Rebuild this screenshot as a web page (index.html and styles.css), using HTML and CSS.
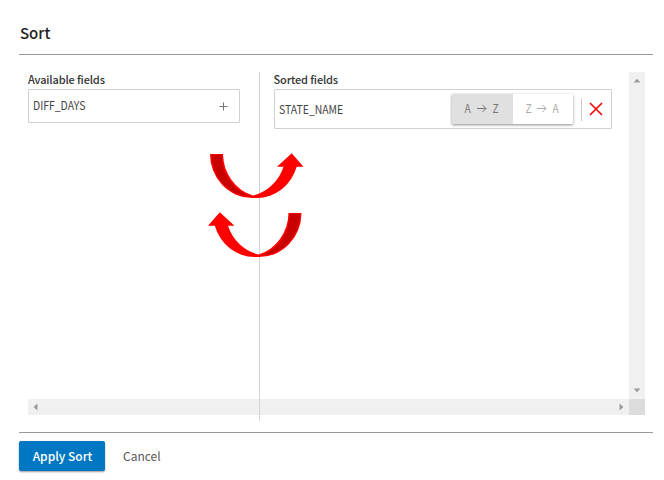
FILE: index.html
```
<!DOCTYPE html>
<html lang="en">
<head>
<meta charset="utf-8">
<title>Sort</title>
<link rel="stylesheet" href="styles.css">
</head>
<body>
<main class="dialog">
  <header class="dialog-header"><h1>Sort</h1></header>
  <section class="viewport">
    <div class="columns">
      <div class="available">
        <h2 class="tight">Available fields</h2>
        <div class="card card-small">
          <span class="name">DIFF_DAYS</span>
          <svg class="plus" width="9" height="9" viewBox="0 0 9 9"><path d="M4.5 .5v8M.5 4.5h8"/></svg>
        </div>
      </div>
      <div class="sorted">
        <h2 class="tight">Sorted fields</h2>
        <div class="card card-large">
          <span class="name">STATE_NAME</span>
          <div class="toggle">
            <button class="option selected"><span>A</span><svg width="10" height="9" viewBox="0 0 10 9"><path d="M0 4.5h9M5.500 1L9 4.500 5.500 8"/></svg><span>Z</span></button>
            <button class="option"><span>Z</span><svg width="10" height="9" viewBox="0 0 10 9"><path d="M0 4.5h9M5.500 1L9 4.500 5.500 8"/></svg><span>A</span></button>
          </div>
          <div class="remove"><svg width="14" height="14" viewBox="0 0 14 14"><path d="M1 1l12 12M13 1L1 13"/></svg></div>
        </div>
      </div>
    </div>
    <div class="bar bar-v">
      <svg width="8" height="5" viewBox="0 0 8 5"><path d="M.7 4.5L4 .8l3.3 3.7z"/></svg>
      <svg width="8" height="5" viewBox="0 0 8 5"><path d="M.7 .5L4 4.2 7.3 .5z"/></svg>
    </div>
    <div class="bar bar-h">
      <svg width="5" height="8" viewBox="0 0 5 8"><path d="M4.5 .5L.6 4l3.9 3.5z"/></svg>
      <svg width="5" height="8" viewBox="0 0 5 8"><path d="M.5 .5L4.4 4 .5 7.5z"/></svg>
    </div>
    <div class="corner"></div>
    <div class="separator"></div>
    <svg class="arrows" width="98" height="108" viewBox="207 151 98 108">
      <defs>
        <g id="swap">
          <path class="bright" d="M210 154H223A42 44 0 0 0 253 195.5A42 44 0 0 0 283.5 166.7H277L291.7 153.3L303.5 166.7H296.7A42 44 0 0 1 257 198H252A42 44 0 0 1 210 154Z"/>
          <path class="dark" d="M211.5 155H221.8A42 43 0 0 0 250 196.3A39 42 0 0 1 211.5 155Z"/>
        </g>
      </defs>
      <use href="#swap"/>
      <use href="#swap" transform="translate(511.500 59) scale(-1 1)"/>
    </svg>
  </section>
  <footer class="dialog-footer">
    <button class="apply">Apply Sort</button>
    <button class="cancel">Cancel</button>
  </footer>
</main>
</body>
</html>
```
FILE: styles.css
```
* { box-sizing: border-box; }
body {
  margin: 0;
  background: #fff;
  color: #333;
  font-family: "Noto Sans CJK SC", "Noto Sans", sans-serif;
}
h1, h2 { margin: 0; font-weight: 500; }
svg { display: block; flex: none; }
button { border: 0; padding: 0; font-family: inherit; background: none; }
.dialog { height: 480px; padding: 0 11px 0 19px; overflow: hidden; }
.dialog-header { height: 55px; padding: 21px 0 0 1px; border-bottom: 1px solid #999; }
h1 { font-size: 15px; line-height: 24px; color: #222; }
.viewport {
  position: relative;
  display: grid;
  grid-template: 327px 16px / 601px 16px;
  margin: 17px 0 0 9px;
  height: 360px;
}
.columns { display: flex; gap: 33.5px; }
.available { width: 212px; }
.sorted { width: 338.5px; }
h2 { height: 17px; font-size: 11px; line-height: 15px; white-space: nowrap; }
.tight { letter-spacing: -.15px; }
.card { display: flex; align-items: center; border: 1px solid #d0d0d0; border-radius: 1px; padding-left: 4px; font-size: 12px; color: #444; }
.name { transform: scaleX(.87); transform-origin: left; line-height: 18px; margin-bottom: 1px; }
.card-small { height: 34px; width: 211.5px; justify-content: space-between; padding-right: 11px; }
.card-large { height: 40px; }
.card-small .name { margin-bottom: 2px; }
.plus { fill: none; stroke: #777; }
.toggle { display: flex; width: 121px; height: 30px; margin: 0 8px 0 auto; box-shadow: 0 1px 3px rgba(0,0,0,.45); border-radius: 1px; }
.option { flex: 1; display: flex; align-items: center; justify-content: center; gap: 5px; font-size: 12px; line-height: 18px; color: #aaa; padding-right: 1px; }
.option span { transform: scaleX(.85); margin-bottom: 3px; }
.option svg { fill: none; stroke: currentColor; margin-bottom: 2px; }
.selected { background: #e0e0e0; color: #777; }
.remove { width: 30px; height: 23px; border-left: 1px solid #ccc; display: flex; align-items: center; padding-left: 7px; }
.remove svg { fill: none; stroke: #f00; stroke-width: 1.6; }
.bar { display: flex; align-items: center; justify-content: space-between; background: #f0f0f0; }
.bar svg { fill: #999; }
.bar-v { flex-direction: column; padding: 6px 0; }
.bar-h { padding: 0 5px; }
.corner { background: #dcdcdc; }
.separator { position: absolute; left: 231px; top: 0; width: 1px; height: 349px; background: #d3d3d3; }
.arrows { position: absolute; left: 179px; top: 79px; }
.bright { fill: #f00; }
.dark { fill: #c90000; }
.dialog-footer { border-top: 1px solid #999; padding-top: 8px; display: flex; align-items: center; gap: 18px; }
.apply { width: 86px; height: 30px; border-radius: 2px; background: #0077c2; color: #fff; font-size: 12px; line-height: 18px; font-weight: 500; padding: 0 0 1px 1px; box-shadow: 0 1px 2px rgba(0,0,0,.4); }
.cancel { height: 30px; font-size: 12px; line-height: 18px; padding-bottom: 1px; color: #555; }
```
